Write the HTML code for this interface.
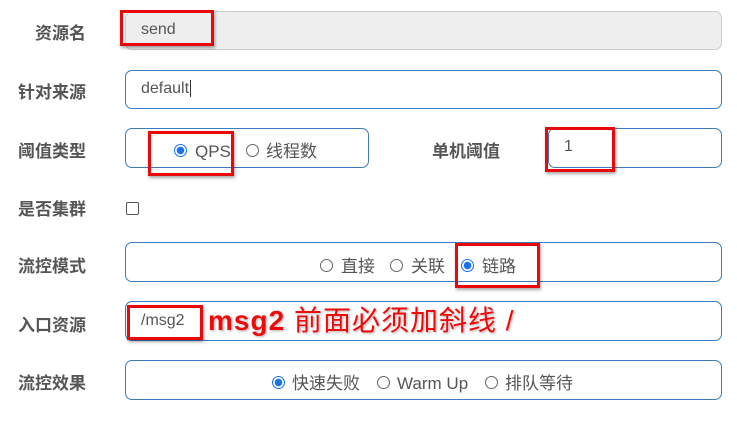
<html><head><style>
body{margin:0;width:737px;height:424px;background:#fff;font-family:"Liberation Sans","Noto Sans CJK SC",sans-serif;position:relative;overflow:hidden}
.l{position:absolute;right:651px;font-size:17px;line-height:17px;font-weight:bold;color:#555;white-space:nowrap}
.b{position:absolute;border:1px solid #3b7bbf;border-radius:7px;box-sizing:border-box}
.t{position:absolute;font-size:16px;line-height:16px;color:#555;white-space:nowrap}
.s{position:absolute;font-size:17px;line-height:17px;color:#555;white-space:nowrap}
.r{position:absolute;border:3px solid #e8090b;box-sizing:border-box;box-shadow:1px 2px 3px rgba(0,0,0,.35)}
.rad{position:absolute;width:13px;height:13px;border:1px solid #666;border-radius:50%;box-sizing:border-box}
.on{border:1px solid #1a73e8;background:radial-gradient(circle,#1a73e8 0 3.5px,#fff 4px)}
</style></head><body>
<div class="l" style="top:25px">资源名</div>
<div class="b" style="left:125px;top:11px;width:597px;height:39px;background:#eee;border-color:#ccc"></div>
<div class="t" style="left:141px;top:22px">send</div>
<div class="r" style="left:120px;top:10px;width:94px;height:36px"></div>

<div class="l" style="top:84px">针对来源</div>
<div class="b" style="left:125px;top:70px;width:597px;height:39px"></div>
<div class="t" style="left:141px;top:81px">default<span style="border-left:1px solid #333;margin-left:1px"></span></div>

<div class="l" style="top:143px">阈值类型</div>
<div class="b" style="left:125px;top:128px;width:244px;height:40px"></div>
<div class="rad on" style="left:174px;top:144px"></div><div class="s" style="left:195px;top:143px">QPS</div>
<div class="rad" style="left:246px;top:144px"></div><div class="s" style="left:266px;top:143px">线程数</div>
<div class="r" style="left:148px;top:131px;width:86px;height:45px"></div>
<div class="l" style="top:143px;right:auto;left:432px">单机阈值</div>
<div class="b" style="left:548px;top:128px;width:174px;height:40px"></div>
<div class="t" style="left:564px;top:139px">1</div>
<div class="r" style="left:545px;top:127px;width:70px;height:45px"></div>

<div class="l" style="top:201px">是否集群</div>
<div style="position:absolute;left:126px;top:202px;width:13px;height:13px;border:1px solid #555;border-radius:2px;box-sizing:border-box"></div>

<div class="l" style="top:258px">流控模式</div>
<div class="b" style="left:125px;top:242px;width:597px;height:40px"></div>
<div class="rad" style="left:320px;top:259px"></div><div class="s" style="left:341px;top:258px">直接</div>
<div class="rad" style="left:390px;top:259px"></div><div class="s" style="left:411px;top:258px">关联</div>
<div class="rad on" style="left:461px;top:259px"></div><div class="s" style="left:482px;top:258px">链路</div>
<div class="r" style="left:455px;top:243px;width:85px;height:45px"></div>

<div class="l" style="top:317px">入口资源</div>
<div class="b" style="left:125px;top:301px;width:597px;height:40px"></div>
<div class="t" style="left:141px;top:313px">/msg2</div>
<div class="r" style="left:127px;top:305px;width:76px;height:35px"></div>
<div style="position:absolute;left:208px;top:307px;font-size:28px;line-height:28px;letter-spacing:1px;font-weight:bold;color:#ee0a0a;white-space:nowrap;text-shadow:0 0 2px #fff,1px 1px 2px #999">msg2 <span style="font-weight:normal">前面必须加斜线 /</span></div>

<div class="l" style="top:375px">流控效果</div>
<div class="b" style="left:125px;top:360px;width:597px;height:40px"></div>
<div class="rad on" style="left:272px;top:376px"></div><div class="s" style="left:292px;top:375px">快速失败</div>
<div class="rad" style="left:377px;top:376px"></div><div class="s" style="left:397px;top:375px">Warm Up</div>
<div class="rad" style="left:485px;top:376px"></div><div class="s" style="left:505px;top:375px">排队等待</div>
</body></html>
